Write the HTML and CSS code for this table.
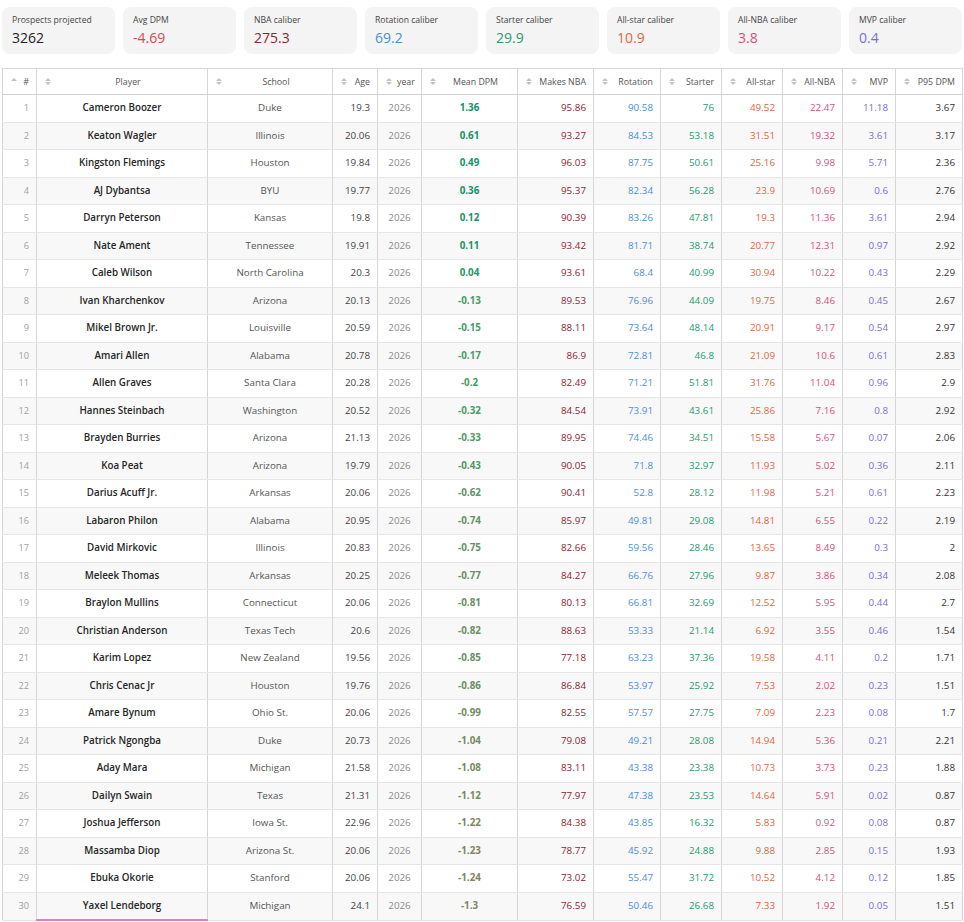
FILE: index.html
```html
<!DOCTYPE html>
<html lang="en">
<head>
<meta charset="utf-8">
<title>Prospects</title>
<link rel="stylesheet" href="styles.css">
</head>
<body>
<div class="page">
  <div class="cards">
    <div class="card"><div class="label">Prospects projected</div><div class="value">3262</div></div>
    <div class="card"><div class="label">Avg DPM</div><div class="value c-avg">-4.69</div></div>
    <div class="card"><div class="label">NBA caliber</div><div class="value c-nba">275.3</div></div>
    <div class="card"><div class="label">Rotation caliber</div><div class="value c-rot">69.2</div></div>
    <div class="card"><div class="label">Starter caliber</div><div class="value c-sta">29.9</div></div>
    <div class="card"><div class="label">All-star caliber</div><div class="value c-all">10.9</div></div>
    <div class="card"><div class="label">All-NBA caliber</div><div class="value c-anba">3.8</div></div>
    <div class="card"><div class="label">MVP caliber</div><div class="value c-mvp">0.4</div></div>
  </div>
  <table class="grid">
    <colgroup>
      <col class="w-rank"><col class="w-player"><col class="w-school"><col class="w-age"><col class="w-year"><col class="w-mean"><col class="w-makes"><col class="w-rot"><col class="w-sta"><col class="w-all"><col class="w-anba"><col class="w-mvp"><col class="w-p95">
    </colgroup>
    <thead>
      <tr>
        <th><div class="th"><span class="sort asc"></span><span class="lbl r">#</span></div></th>
        <th><div class="th"><span class="sort"></span><span class="lbl c">Player</span></div></th>
        <th><div class="th"><span class="sort"></span><span class="lbl c">School</span></div></th>
        <th><div class="th"><span class="sort"></span><span class="lbl r">Age</span></div></th>
        <th><div class="th"><span class="sort"></span><span class="lbl c">year</span></div></th>
        <th><div class="th"><span class="sort"></span><span class="lbl c">Mean DPM</span></div></th>
        <th><div class="th"><span class="sort"></span><span class="lbl r">Makes NBA</span></div></th>
        <th><div class="th"><span class="sort"></span><span class="lbl r">Rotation</span></div></th>
        <th><div class="th"><span class="sort"></span><span class="lbl r">Starter</span></div></th>
        <th><div class="th"><span class="sort"></span><span class="lbl r">All-star</span></div></th>
        <th><div class="th"><span class="sort"></span><span class="lbl r">All-NBA</span></div></th>
        <th><div class="th"><span class="sort"></span><span class="lbl r">MVP</span></div></th>
        <th><div class="th"><span class="sort"></span><span class="lbl r">P95 DPM</span></div></th>
      </tr>
    </thead>
    <tbody>
      <tr><td class="rank">1</td><td class="player">Cameron Boozer</td><td class="school">Duke</td><td class="num">19.3</td><td class="year">2026</td><td class="mean" style="color:rgb(18,146,106)">1.36</td><td class="num makes">95.86</td><td class="num rot">90.58</td><td class="num sta">76</td><td class="num all">49.52</td><td class="num anba">22.47</td><td class="num mvp">11.18</td><td class="num p95">3.67</td></tr>
      <tr><td class="rank">2</td><td class="player">Keaton Wagler</td><td class="school">Illinois</td><td class="num">20.06</td><td class="year">2026</td><td class="mean" style="color:rgb(18,146,106)">0.61</td><td class="num makes">93.27</td><td class="num rot">84.53</td><td class="num sta">53.18</td><td class="num all">31.51</td><td class="num anba">19.32</td><td class="num mvp">3.61</td><td class="num p95">3.17</td></tr>
      <tr><td class="rank">3</td><td class="player">Kingston Flemings</td><td class="school">Houston</td><td class="num">19.84</td><td class="year">2026</td><td class="mean" style="color:rgb(18,146,106)">0.49</td><td class="num makes">96.03</td><td class="num rot">87.75</td><td class="num sta">50.61</td><td class="num all">25.16</td><td class="num anba">9.98</td><td class="num mvp">5.71</td><td class="num p95">2.36</td></tr>
      <tr><td class="rank">4</td><td class="player">AJ Dybantsa</td><td class="school">BYU</td><td class="num">19.77</td><td class="year">2026</td><td class="mean" style="color:rgb(18,146,106)">0.36</td><td class="num makes">95.37</td><td class="num rot">82.34</td><td class="num sta">56.28</td><td class="num all">23.9</td><td class="num anba">10.69</td><td class="num mvp">0.6</td><td class="num p95">2.76</td></tr>
      <tr><td class="rank">5</td><td class="player">Darryn Peterson</td><td class="school">Kansas</td><td class="num">19.8</td><td class="year">2026</td><td class="mean" style="color:rgb(24,148,106)">0.12</td><td class="num makes">90.39</td><td class="num rot">83.26</td><td class="num sta">47.81</td><td class="num all">19.3</td><td class="num anba">11.36</td><td class="num mvp">3.61</td><td class="num p95">2.94</td></tr>
      <tr><td class="rank">6</td><td class="player">Nate Ament</td><td class="school">Tennessee</td><td class="num">19.91</td><td class="year">2026</td><td class="mean" style="color:rgb(24,148,106)">0.11</td><td class="num makes">93.42</td><td class="num rot">81.71</td><td class="num sta">38.74</td><td class="num all">20.77</td><td class="num anba">12.31</td><td class="num mvp">0.97</td><td class="num p95">2.92</td></tr>
      <tr><td class="rank">7</td><td class="player">Caleb Wilson</td><td class="school">North Carolina</td><td class="num">20.3</td><td class="year">2026</td><td class="mean" style="color:rgb(30,150,106)">0.04</td><td class="num makes">93.61</td><td class="num rot">68.4</td><td class="num sta">40.99</td><td class="num all">30.94</td><td class="num anba">10.22</td><td class="num mvp">0.43</td><td class="num p95">2.29</td></tr>
      <tr><td class="rank">8</td><td class="player">Ivan Kharchenkov</td><td class="school">Arizona</td><td class="num">20.13</td><td class="year">2026</td><td class="mean" style="color:rgb(67,157,105)">-0.13</td><td class="num makes">89.53</td><td class="num rot">76.96</td><td class="num sta">44.09</td><td class="num all">19.75</td><td class="num anba">8.46</td><td class="num mvp">0.45</td><td class="num p95">2.67</td></tr>
      <tr><td class="rank">9</td><td class="player">Mikel Brown Jr.</td><td class="school">Louisville</td><td class="num">20.59</td><td class="year">2026</td><td class="mean" style="color:rgb(68,157,105)">-0.15</td><td class="num makes">88.11</td><td class="num rot">73.64</td><td class="num sta">48.14</td><td class="num all">20.91</td><td class="num anba">9.17</td><td class="num mvp">0.54</td><td class="num p95">2.97</td></tr>
      <tr><td class="rank">10</td><td class="player">Amari Allen</td><td class="school">Alabama</td><td class="num">20.78</td><td class="year">2026</td><td class="mean" style="color:rgb(69,157,105)">-0.17</td><td class="num makes">86.9</td><td class="num rot">72.81</td><td class="num sta">46.8</td><td class="num all">21.09</td><td class="num anba">10.6</td><td class="num mvp">0.61</td><td class="num p95">2.83</td></tr>
      <tr><td class="rank">11</td><td class="player">Allen Graves</td><td class="school">Santa Clara</td><td class="num">20.28</td><td class="year">2026</td><td class="mean" style="color:rgb(70,156,104)">-0.2</td><td class="num makes">82.49</td><td class="num rot">71.21</td><td class="num sta">51.81</td><td class="num all">31.76</td><td class="num anba">11.04</td><td class="num mvp">0.96</td><td class="num p95">2.9</td></tr>
      <tr><td class="rank">12</td><td class="player">Hannes Steinbach</td><td class="school">Washington</td><td class="num">20.52</td><td class="year">2026</td><td class="mean" style="color:rgb(77,154,104)">-0.32</td><td class="num makes">84.54</td><td class="num rot">73.91</td><td class="num sta">43.61</td><td class="num all">25.86</td><td class="num anba">7.16</td><td class="num mvp">0.8</td><td class="num p95">2.92</td></tr>
      <tr><td class="rank">13</td><td class="player">Brayden Burries</td><td class="school">Arizona</td><td class="num">21.13</td><td class="year">2026</td><td class="mean" style="color:rgb(77,153,103)">-0.33</td><td class="num makes">89.95</td><td class="num rot">74.46</td><td class="num sta">34.51</td><td class="num all">15.58</td><td class="num anba">5.67</td><td class="num mvp">0.07</td><td class="num p95">2.06</td></tr>
      <tr><td class="rank">14</td><td class="player">Koa Peat</td><td class="school">Arizona</td><td class="num">19.79</td><td class="year">2026</td><td class="mean" style="color:rgb(83,151,103)">-0.43</td><td class="num makes">90.05</td><td class="num rot">71.8</td><td class="num sta">32.97</td><td class="num all">11.93</td><td class="num anba">5.02</td><td class="num mvp">0.36</td><td class="num p95">2.11</td></tr>
      <tr><td class="rank">15</td><td class="player">Darius Acuff Jr.</td><td class="school">Arkansas</td><td class="num">20.06</td><td class="year">2026</td><td class="mean" style="color:rgb(92,148,101)">-0.62</td><td class="num makes">90.41</td><td class="num rot">52.8</td><td class="num sta">28.12</td><td class="num all">11.98</td><td class="num anba">5.21</td><td class="num mvp">0.61</td><td class="num p95">2.23</td></tr>
      <tr><td class="rank">16</td><td class="player">Labaron Philon</td><td class="school">Alabama</td><td class="num">20.95</td><td class="year">2026</td><td class="mean" style="color:rgb(99,145,100)">-0.74</td><td class="num makes">85.97</td><td class="num rot">49.81</td><td class="num sta">29.08</td><td class="num all">14.81</td><td class="num anba">6.55</td><td class="num mvp">0.22</td><td class="num p95">2.19</td></tr>
      <tr><td class="rank">17</td><td class="player">David Mirkovic</td><td class="school">Illinois</td><td class="num">20.83</td><td class="year">2026</td><td class="mean" style="color:rgb(99,145,100)">-0.75</td><td class="num makes">82.66</td><td class="num rot">59.56</td><td class="num sta">28.46</td><td class="num all">13.65</td><td class="num anba">8.49</td><td class="num mvp">0.3</td><td class="num p95">2</td></tr>
      <tr><td class="rank">18</td><td class="player">Meleek Thomas</td><td class="school">Arkansas</td><td class="num">20.25</td><td class="year">2026</td><td class="mean" style="color:rgb(100,145,100)">-0.77</td><td class="num makes">84.27</td><td class="num rot">66.76</td><td class="num sta">27.96</td><td class="num all">9.87</td><td class="num anba">3.86</td><td class="num mvp">0.34</td><td class="num p95">2.08</td></tr>
      <tr><td class="rank">19</td><td class="player">Braylon Mullins</td><td class="school">Connecticut</td><td class="num">20.06</td><td class="year">2026</td><td class="mean" style="color:rgb(102,144,100)">-0.81</td><td class="num makes">80.13</td><td class="num rot">66.81</td><td class="num sta">32.69</td><td class="num all">12.52</td><td class="num anba">5.95</td><td class="num mvp">0.44</td><td class="num p95">2.7</td></tr>
      <tr><td class="rank">20</td><td class="player">Christian Anderson</td><td class="school">Texas Tech</td><td class="num">20.6</td><td class="year">2026</td><td class="mean" style="color:rgb(103,144,100)">-0.82</td><td class="num makes">88.63</td><td class="num rot">53.33</td><td class="num sta">21.14</td><td class="num all">6.92</td><td class="num anba">3.55</td><td class="num mvp">0.46</td><td class="num p95">1.54</td></tr>
      <tr><td class="rank">21</td><td class="player">Karim Lopez</td><td class="school">New Zealand</td><td class="num">19.56</td><td class="year">2026</td><td class="mean" style="color:rgb(104,143,99)">-0.85</td><td class="num makes">77.18</td><td class="num rot">63.23</td><td class="num sta">37.36</td><td class="num all">19.58</td><td class="num anba">4.11</td><td class="num mvp">0.2</td><td class="num p95">1.71</td></tr>
      <tr><td class="rank">22</td><td class="player">Chris Cenac Jr</td><td class="school">Houston</td><td class="num">19.76</td><td class="year">2026</td><td class="mean" style="color:rgb(105,143,99)">-0.86</td><td class="num makes">86.84</td><td class="num rot">53.97</td><td class="num sta">25.92</td><td class="num all">7.53</td><td class="num anba">2.02</td><td class="num mvp">0.23</td><td class="num p95">1.51</td></tr>
      <tr><td class="rank">23</td><td class="player">Amare Bynum</td><td class="school">Ohio St.</td><td class="num">20.06</td><td class="year">2026</td><td class="mean" style="color:rgb(112,140,98)">-0.99</td><td class="num makes">82.55</td><td class="num rot">57.57</td><td class="num sta">27.75</td><td class="num all">7.09</td><td class="num anba">2.23</td><td class="num mvp">0.08</td><td class="num p95">1.7</td></tr>
      <tr><td class="rank">24</td><td class="player">Patrick Ngongba</td><td class="school">Duke</td><td class="num">20.73</td><td class="year">2026</td><td class="mean" style="color:rgb(114,139,98)">-1.04</td><td class="num makes">79.08</td><td class="num rot">49.21</td><td class="num sta">28.08</td><td class="num all">14.94</td><td class="num anba">5.36</td><td class="num mvp">0.21</td><td class="num p95">2.21</td></tr>
      <tr><td class="rank">25</td><td class="player">Aday Mara</td><td class="school">Michigan</td><td class="num">21.58</td><td class="year">2026</td><td class="mean" style="color:rgb(117,138,98)">-1.08</td><td class="num makes">83.11</td><td class="num rot">43.38</td><td class="num sta">23.38</td><td class="num all">10.73</td><td class="num anba">3.73</td><td class="num mvp">0.23</td><td class="num p95">1.88</td></tr>
      <tr><td class="rank">26</td><td class="player">Dailyn Swain</td><td class="school">Texas</td><td class="num">21.31</td><td class="year">2026</td><td class="mean" style="color:rgb(119,138,97)">-1.12</td><td class="num makes">77.97</td><td class="num rot">47.38</td><td class="num sta">23.53</td><td class="num all">14.64</td><td class="num anba">5.91</td><td class="num mvp">0.02</td><td class="num p95">0.87</td></tr>
      <tr><td class="rank">27</td><td class="player">Joshua Jefferson</td><td class="school">Iowa St.</td><td class="num">22.96</td><td class="year">2026</td><td class="mean" style="color:rgb(124,136,97)">-1.22</td><td class="num makes">84.38</td><td class="num rot">43.85</td><td class="num sta">16.32</td><td class="num all">5.83</td><td class="num anba">0.92</td><td class="num mvp">0.08</td><td class="num p95">0.87</td></tr>
      <tr><td class="rank">28</td><td class="player">Massamba Diop</td><td class="school">Arizona St.</td><td class="num">20.06</td><td class="year">2026</td><td class="mean" style="color:rgb(124,135,97)">-1.23</td><td class="num makes">78.77</td><td class="num rot">45.92</td><td class="num sta">24.88</td><td class="num all">9.88</td><td class="num anba">2.85</td><td class="num mvp">0.15</td><td class="num p95">1.93</td></tr>
      <tr><td class="rank">29</td><td class="player">Ebuka Okorie</td><td class="school">Stanford</td><td class="num">20.06</td><td class="year">2026</td><td class="mean" style="color:rgb(125,135,96)">-1.24</td><td class="num makes">73.02</td><td class="num rot">55.47</td><td class="num sta">31.72</td><td class="num all">10.52</td><td class="num anba">4.12</td><td class="num mvp">0.12</td><td class="num p95">1.85</td></tr>
      <tr><td class="rank">30</td><td class="player focus">Yaxel Lendeborg</td><td class="school">Michigan</td><td class="num">24.1</td><td class="year">2026</td><td class="mean" style="color:rgb(128,134,96)">-1.3</td><td class="num makes">76.59</td><td class="num rot">50.46</td><td class="num sta">26.68</td><td class="num all">7.33</td><td class="num anba">1.92</td><td class="num mvp">0.05</td><td class="num p95">1.51</td></tr>
    </tbody>
  </table>
</div>
</body>
</html>
```
FILE: styles.css
```css
html, body {
  margin: 0;
  padding: 0;
  background: #ffffff;
}
body {
  font-family: "Open Sans", "Noto Sans", "Liberation Sans", sans-serif;
  color: #333;
}
.page {
  padding: 7px 2px 0 2px;
  width: 960px;
}
.cards {
  display: grid;
  grid-template-columns: repeat(8, 1fr);
  gap: 8px;
}
.card {
  background: #f4f4f4;
  border-radius: 8px;
  height: 47px;
  box-sizing: border-box;
  padding: 7px 10px 0 10px;
}
.label {
  font-size: 8.6px;
  line-height: 13px;
  color: #444;
  white-space: nowrap;
}
.value {
  font-size: 14px;
  line-height: 20px;
  margin-top: 1px;
  color: #222;
}
.c-avg { color: #d9474f; }
.c-nba { color: #8e2430; }
.c-rot { color: #4a8fd8; }
.c-sta { color: #269b72; }
.c-all { color: #e0663e; }
.c-anba { color: #d4507f; }
.c-mvp { color: #7b6dd8; }

.grid {
  margin-top: 14px;
  width: 960px;
  table-layout: fixed;
  border-collapse: collapse;
  font-size: 9.8px;
}
.w-rank { width: 34px; }
.w-player { width: 171px; }
.w-school { width: 125px; }
.w-age { width: 45px; }
.w-year { width: 44px; }
.w-mean { width: 96px; }
.w-makes { width: 76px; }
.w-rot { width: 67px; }
.w-sta { width: 61px; }
.w-all { width: 61px; }
.w-anba { width: 60px; }
.w-mvp { width: 53px; }
.w-p95 { width: 67px; }

.grid th {
  height: 25px;
  padding: 0 7px 0 8px;
  font-size: 8.8px;
  font-weight: 400;
  color: #555;
  border: 1px solid #d6d6d6;
  border-bottom: 1px solid #d0d0d0;
  white-space: nowrap;
}
.th {
  display: flex;
  align-items: center;
}
.lbl { flex: 1; }
.lbl.r { text-align: right; }
.lbl.c { text-align: center; }
.sort {
  display: flex;
  flex-direction: column;
  gap: 1.5px;
  margin-right: 5px;
  flex: none;
}
.sort::before {
  content: "";
  border-left: 3px solid transparent;
  border-right: 3px solid transparent;
  border-bottom: 3px solid #c2c2c2;
}
.sort::after {
  content: "";
  border-left: 3px solid transparent;
  border-right: 3px solid transparent;
  border-top: 3px solid #c2c2c2;
}
.sort.asc::after {
  border-top-color: transparent;
}

.grid td {
  height: 26.5px;
  padding: 0 7px;
  line-height: 16px;
  border-left: 1px solid #d6d6d6;
  border-right: 1px solid #d6d6d6;
  border-bottom: 1px solid #e6e6e6;
  white-space: nowrap;
  overflow: hidden;
}
.grid tbody tr:nth-child(even) td {
  background: #f8f8f8;
}
.rank {
  text-align: right;
  color: #a0a0a0;
  font-size: 9.2px;
}
.player {
  text-align: center;
  font-weight: 600;
  color: #262626;
}
.player.focus {
  border-bottom: 2px solid #e17fc9;
}
.school {
  text-align: center;
  color: #555;
}
.num {
  text-align: right;
  color: #444;
}
.year {
  text-align: center;
  color: #8a8a8a;
}
.mean {
  text-align: center;
  font-weight: 700;
}
.makes { color: #8e2430; }
.rot { color: #4a8fd8; }
.sta { color: #269b72; }
.all { color: #e0663e; }
.anba { color: #d4507f; }
.mvp { color: #7b6dd8; }
.p95 { color: #333; }
```
